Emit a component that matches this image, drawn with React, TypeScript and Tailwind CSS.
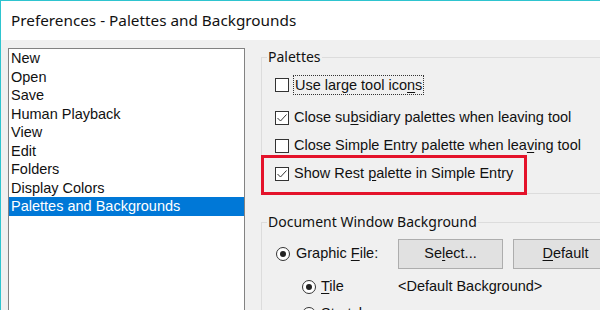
import React from 'react';

const items = ['New', 'Open', 'Save', 'Human Playback', 'View', 'Edit', 'Folders', 'Display Colors', 'Palettes and Backgrounds'];

const Check: React.FC<{ checked?: boolean }> = ({ checked }) => (
  <span className="w-[14px] h-[14px] shrink-0 border border-[#333] bg-white flex items-center justify-center">
    {checked && (
      <svg width="12" height="12" viewBox="0 0 12 12">
        <path d="M1.5 6 L4.5 9 L10.5 2.5" fill="none" stroke="#333" strokeWidth="1" />
      </svg>
    )}
  </span>
);

const Radio: React.FC<{ on?: boolean }> = ({ on }) => (
  <span className="w-[14px] h-[14px] shrink-0 rounded-full border border-[#333] bg-white flex items-center justify-center">
    {on && <span className="w-[6px] h-[6px] rounded-full bg-[#222]" />}
  </span>
);

const U: React.FC<{ children: React.ReactNode }> = ({ children }) => <span className="underline underline-offset-2">{children}</span>;

export default function App() {
  const sans = { fontFamily: '"Liberation Sans", Arial, sans-serif' };
  const ui = { fontFamily: '"Noto Sans", "Open Sans", sans-serif' };

  return (
    <div className="w-[600px] h-[310px] overflow-hidden border-t border-l border-[#2ec4cf] flex flex-col text-[#111]">
      {/* title bar */}
      <div className="h-[39px] shrink-0 bg-white flex items-center pl-[10px] text-[15.3px]" style={ui}>
        Preferences - Palettes and Backgrounds
      </div>

      <div className="flex-1 bg-[#f0f0f0] flex pt-[8px] pl-[7px] min-h-0">
        {/* list */}
        <div className="w-[237px] h-[300px] shrink-0 border border-[#828282] bg-white text-[14.5px]" style={sans}>
          {items.map((it) => (
            <div
              key={it}
              className={`h-[18.5px] leading-[18.5px] pl-[2px] ${it === 'Palettes and Backgrounds' ? 'bg-[#0078d7] text-white' : ''}`}
            >
              {it}
            </div>
          ))}
        </div>

        {/* right side */}
        <div className="ml-[16px] w-[360px] shrink-0 -mt-[1px]">
          <fieldset className="border border-[#dcdcdc] pl-[13px] pb-[5px]">
            <legend className="-ml-[8px] px-[1px] text-[14px] leading-[20px]" style={ui}>Palettes</legend>
            <div className="relative text-[14.5px]" style={sans}>
              <div className="mt-[4px] h-[28px] flex items-center gap-[4px]">
                <Check />
                <span className="border border-dotted border-[#333] h-[20px] leading-[18px] px-[1px]">
                  Use large tool ico<U>n</U>s
                </span>
              </div>
              <div className="mt-[5px] h-[28px] flex items-center gap-[5px]">
                <Check checked />
                <span>Close su<U>b</U>sidiary palettes when leaving tool</span>
              </div>
              <div className="h-[28px] flex items-center gap-[5px]">
                <Check />
                <span>Close Simple Entry palette when lea<U>v</U>ing tool</span>
              </div>
              <div className="h-[28px] flex items-center gap-[5px]">
                <Check checked />
                <span>Show Rest <U>p</U>alette in Simple Entry</span>
              </div>
              <div className="absolute left-[-14px] top-[84px] w-[266px] h-[40px] border-[3px] border-[#e4132b]" />
            </div>
          </fieldset>

          <fieldset className="mt-[18px] border border-[#dcdcdc] pl-[13px] pb-[20px]">
            <legend className="-ml-[8px] px-[1px] text-[14px] leading-[20px]" style={ui}>Document Window Background</legend>
            <div className="text-[14.5px]" style={sans}>
              <div className="mt-[7px] h-[30px] flex items-center">
                <div className="w-[123px] flex items-center gap-[6px] pl-[1px]">
                  <Radio on />
                  <span>Graphic <U>F</U>ile:</span>
                </div>
                <button className="w-[105px] h-[30px] bg-[#e1e1e1] border border-[#adadad]">Se<U>l</U>ect...</button>
                <button className="ml-[10px] w-[105px] h-[30px] bg-[#e1e1e1] border border-[#adadad]"><U>D</U>efault</button>
              </div>
              <div className="h-[36px] flex items-center">
                <div className="w-[123px] flex items-center gap-[5px] pl-[27px]">
                  <Radio on />
                  <span><U>T</U>ile</span>
                </div>
                <span>&lt;Default Background&gt;</span>
              </div>
              <div className="h-[18px] flex items-center">
                <div className="flex items-center gap-[5px] pl-[27px]">
                  <Radio />
                  <span>Stretch</span>
                </div>
              </div>
            </div>
          </fieldset>
        </div>
      </div>
    </div>
  );
}
